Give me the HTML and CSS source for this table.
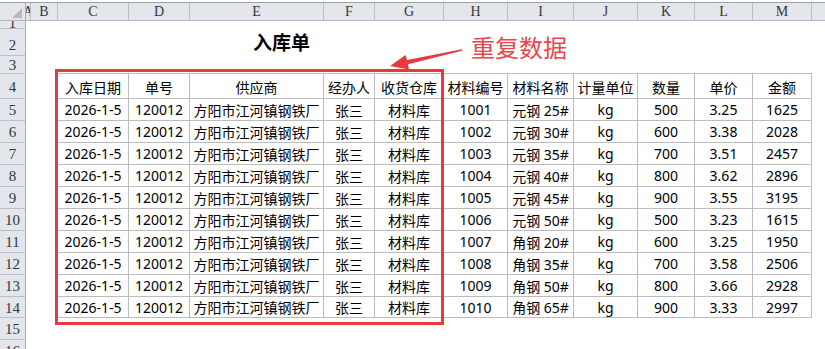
FILE: index.html
```html
<!DOCTYPE html>
<html lang="zh">
<head>
<meta charset="utf-8">
<link rel="stylesheet" href="styles.css">
</head>
<body>
<div class="sheet">
  <div class="topgap"></div>
  <div class="colhead">
    <div class="hc corner"><svg width="10" height="10" viewBox="0 0 10 10"><polygon points="10,0 10,10 0,10" fill="#b6bac1"/></svg></div>
    <div class="hc w-a">A</div>
    <div class="hc w-b">B</div>
    <div class="hc w-c">C</div>
    <div class="hc w-d">D</div>
    <div class="hc w-e">E</div>
    <div class="hc w-f">F</div>
    <div class="hc w-g">G</div>
    <div class="hc w-h">H</div>
    <div class="hc w-i">I</div>
    <div class="hc w-j">J</div>
    <div class="hc w-k">K</div>
    <div class="hc w-l">L</div>
    <div class="hc w-m">M</div>
    <div class="hc w-n"></div>
  </div>
  <div class="body">
    <div class="rowhead">
      <div class="rh r1">1</div>
      <div class="rh r2">2</div>
      <div class="rh r3">3</div>
      <div class="rh r4">4</div>
      <div class="rh rd">5</div>
      <div class="rh rd">6</div>
      <div class="rh rd">7</div>
      <div class="rh rd">8</div>
      <div class="rh rd">9</div>
      <div class="rh rd">10</div>
      <div class="rh rd">11</div>
      <div class="rh rd">12</div>
      <div class="rh rd">13</div>
      <div class="rh r14">14</div>
      <div class="rh rd">15</div>
      <div class="rh rd">16</div>
    </div>
    <div class="cells">
      <div class="title-row"><span class="title">入库单</span></div>
      <div class="grid">
        <div class="c th">入库日期</div><div class="c th">单号</div><div class="c th">供应商</div><div class="c th">经办人</div><div class="c th">收货仓库</div><div class="c th">材料编号</div><div class="c th">材料名称</div><div class="c th">计量单位</div><div class="c th">数量</div><div class="c th">单价</div><div class="c th">金额</div>

        <div class="c">2026-1-5</div><div class="c">120012</div><div class="c">方阳市江河镇钢铁厂</div><div class="c">张三</div><div class="c">材料库</div><div class="c">1001</div><div class="c">元钢 25#</div><div class="c">kg</div><div class="c">500</div><div class="c">3.25</div><div class="c">1625</div>
        <div class="c">2026-1-5</div><div class="c">120012</div><div class="c">方阳市江河镇钢铁厂</div><div class="c">张三</div><div class="c">材料库</div><div class="c">1002</div><div class="c">元钢 30#</div><div class="c">kg</div><div class="c">600</div><div class="c">3.38</div><div class="c">2028</div>
        <div class="c">2026-1-5</div><div class="c">120012</div><div class="c">方阳市江河镇钢铁厂</div><div class="c">张三</div><div class="c">材料库</div><div class="c">1003</div><div class="c">元钢 35#</div><div class="c">kg</div><div class="c">700</div><div class="c">3.51</div><div class="c">2457</div>
        <div class="c">2026-1-5</div><div class="c">120012</div><div class="c">方阳市江河镇钢铁厂</div><div class="c">张三</div><div class="c">材料库</div><div class="c">1004</div><div class="c">元钢 40#</div><div class="c">kg</div><div class="c">800</div><div class="c">3.62</div><div class="c">2896</div>
        <div class="c">2026-1-5</div><div class="c">120012</div><div class="c">方阳市江河镇钢铁厂</div><div class="c">张三</div><div class="c">材料库</div><div class="c">1005</div><div class="c">元钢 45#</div><div class="c">kg</div><div class="c">900</div><div class="c">3.55</div><div class="c">3195</div>
        <div class="c">2026-1-5</div><div class="c">120012</div><div class="c">方阳市江河镇钢铁厂</div><div class="c">张三</div><div class="c">材料库</div><div class="c">1006</div><div class="c">元钢 50#</div><div class="c">kg</div><div class="c">500</div><div class="c">3.23</div><div class="c">1615</div>
        <div class="c">2026-1-5</div><div class="c">120012</div><div class="c">方阳市江河镇钢铁厂</div><div class="c">张三</div><div class="c">材料库</div><div class="c">1007</div><div class="c">角钢 20#</div><div class="c">kg</div><div class="c">600</div><div class="c">3.25</div><div class="c">1950</div>
        <div class="c">2026-1-5</div><div class="c">120012</div><div class="c">方阳市江河镇钢铁厂</div><div class="c">张三</div><div class="c">材料库</div><div class="c">1008</div><div class="c">角钢 35#</div><div class="c">kg</div><div class="c">700</div><div class="c">3.58</div><div class="c">2506</div>
        <div class="c">2026-1-5</div><div class="c">120012</div><div class="c">方阳市江河镇钢铁厂</div><div class="c">张三</div><div class="c">材料库</div><div class="c">1009</div><div class="c">角钢 50#</div><div class="c">kg</div><div class="c">800</div><div class="c">3.66</div><div class="c">2928</div>
        <div class="c last">2026-1-5</div><div class="c last">120012</div><div class="c last">方阳市江河镇钢铁厂</div><div class="c last">张三</div><div class="c last">材料库</div><div class="c last">1010</div><div class="c last">角钢 65#</div><div class="c last">kg</div><div class="c last">900</div><div class="c last">3.33</div><div class="c last">2997</div>
      </div>
    </div>
  </div>

  <svg class="overlay" width="825" height="349" viewBox="0 0 825 349">
    <rect x="56.5" y="70.5" width="386" height="253" fill="none" stroke="#e63a40" stroke-width="3"/>
    <polygon points="390,66 409,69.5 408,64.2 462,50.8 462,49.2 407,60 405.5,55" fill="#e63a40"/>
  </svg>
  <div class="note">重复数据</div>
</div>
</body>
</html>
```

FILE: styles.css
```css
html, body {
  margin: 0;
  padding: 0;
  background: #ffffff;
}

body {
  width: 825px;
  height: 349px;
  overflow: hidden;
}

.sheet {
  position: relative;
  width: 825px;
  height: 349px;
  overflow: hidden;
  background: #ffffff;
}

.topgap {
  height: 2px;
  background: #ffffff;
}

.colhead {
  display: flex;
  height: 19px;
  box-sizing: border-box;
  border-top: 1px solid #9da2a9;
  border-bottom: 1px solid #b4b8bf;
  background: #e3e6eb;
}

.hc {
  box-sizing: border-box;
  flex: none;
  height: 100%;
  border-right: 1px solid #babec5;
  display: flex;
  align-items: center;
  justify-content: center;
  font-family: "Liberation Serif", "DejaVu Serif", serif;
  font-size: 14px;
  color: #333840;
  overflow: hidden;
}

.corner {
  width: 26px;
  justify-content: flex-end;
  align-items: flex-end;
  padding: 0 3px 2px 0;
  border-right-color: #a7acb3;
}

.w-a { width: 5px; }
.w-b { width: 27px; }
.w-c { width: 71px; }
.w-d { width: 61px; }
.w-e { width: 134px; }
.w-f { width: 51px; }
.w-g { width: 69px; }
.w-h { width: 64px; }
.w-i { width: 66px; }
.w-j { width: 64px; }
.w-k { width: 57px; }
.w-l { width: 58px; }
.w-m { width: 59px; }
.w-n { flex: 1; border-right: none; }

.body {
  display: flex;
}

.rowhead {
  width: 26px;
  flex: none;
  display: flex;
  flex-direction: column;
}

.rh {
  box-sizing: border-box;
  border-right: 1px solid #a7acb3;
  border-bottom: 1px solid #babec5;
  background: #e3e6eb;
  display: flex;
  align-items: center;
  justify-content: center;
  font-family: "Liberation Serif", "DejaVu Serif", serif;
  font-size: 15px;
  color: #333840;
  overflow: hidden;
  padding-top: 2px;
}

.r1 { height: 8px; align-items: flex-end; line-height: 10px; padding-top: 0; }
.r2 { height: 27px; align-items: flex-end; padding-bottom: 1px; }
.r3 { height: 18px; }
.r4 { height: 25px; }
.rd { height: 22px; }
.r14 { height: 21px; }

.cells {
  flex: 1;
  display: flex;
  flex-direction: column;
}

.title-row {
  height: 52px;
  box-sizing: border-box;
  padding: 10px 0 0 227px;
}

.title {
  font-family: "Noto Sans CJK SC", sans-serif;
  font-weight: 700;
  font-size: 19px;
  line-height: 22px;
  color: #000000;
}

.grid {
  margin-left: 31px;
  display: grid;
  grid-template-columns: 71px 61px 134px 51px 69px 64px 66px 64px 57px 58px 59px;
  grid-template-rows: 25px repeat(9, 22px) 21px;
  width: max-content;
  border-left: 1px solid #bcbcbc;
  border-top: 1px solid #bcbcbc;
}

.c {
  box-sizing: border-box;
  border-right: 1px solid #bcbcbc;
  border-bottom: 1px solid #bcbcbc;
  display: flex;
  align-items: center;
  justify-content: center;
  font-family: "Noto Sans", "Noto Sans CJK SC", sans-serif;
  font-size: 14px;
  color: #000000;
  white-space: nowrap;
  overflow: hidden;
}

.th {
  padding-top: 1px;
}

.overlay {
  position: absolute;
  left: 0;
  top: 0;
  pointer-events: none;
}

.note {
  position: absolute;
  left: 471px;
  top: 31px;
  font-family: "Noto Sans CJK SC", sans-serif;
  font-size: 24px;
  line-height: 32px;
  color: #e8464c;
  letter-spacing: 0px;
}
```
